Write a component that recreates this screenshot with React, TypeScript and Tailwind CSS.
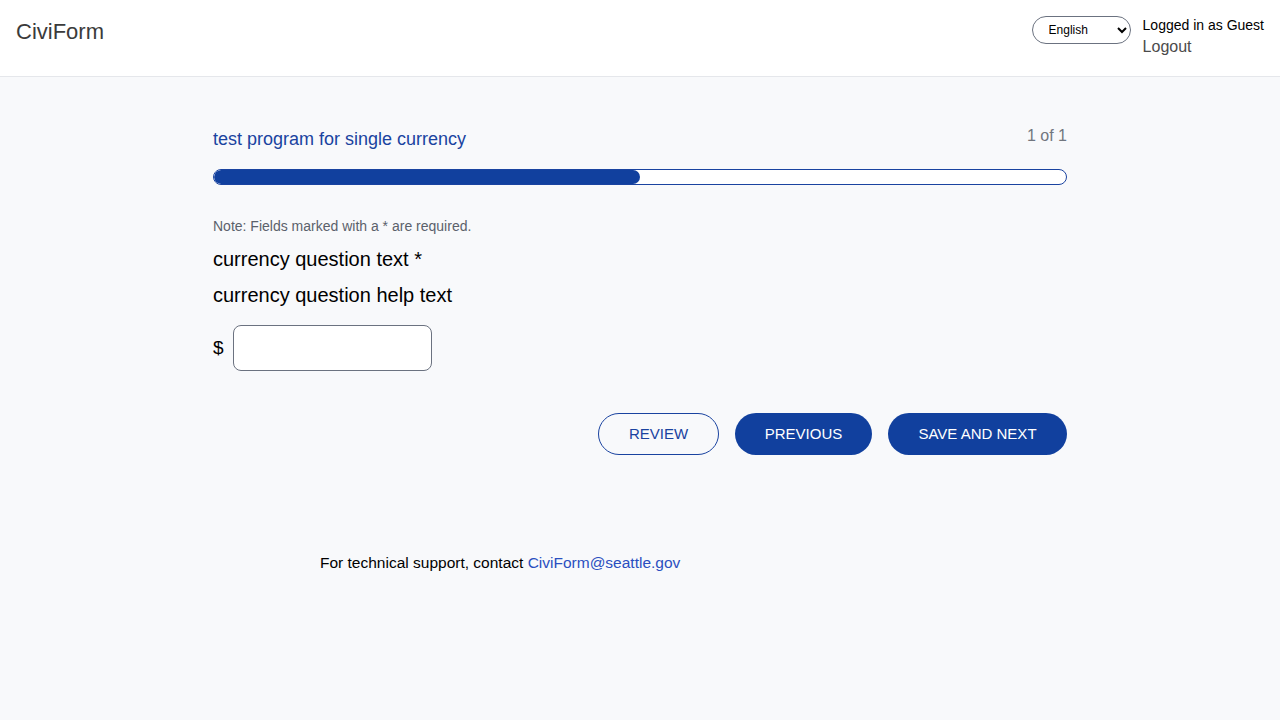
export default function App() {
  return (
    <div className="min-h-screen bg-[#f8f9fb] font-['Liberation_Sans',Arial,sans-serif]">
      {/* HEADER */}
      <header className="flex h-[77px] items-start justify-between border-b border-[#e5e7eb] bg-white px-4 pt-[16px]">
        <div className="text-[22px] leading-[32px] text-[#3b3b3b]">CiviForm</div>
        <div className="flex items-start gap-3">
          <select
            defaultValue="en"
            className="h-[28px] w-[99px] rounded-full border border-[#6b7280] bg-white pl-3 pr-1 text-[12px] text-black"
          >
            <option value="en">English</option>
          </select>
          <div className="flex flex-col">
            <span className="text-[14px] leading-[18px] text-black">Logged in as Guest</span>
            <a href="#" className="text-[16px] leading-[26px] text-[#4b4b4b]">
              Logout
            </a>
          </div>
        </div>
      </header>

      {/* MAIN */}
      <main className="mx-auto w-[854px] pt-[48px]">
        <div className="flex items-start justify-between">
          <h1 className="text-[18px] leading-[28px] text-[#1a43a0]">test program for single currency</h1>
          <span className="mt-[-3px] text-[16px] leading-[28px] text-[#71767e]">1 of 1</span>
        </div>

        <div className="mt-[16px] h-[16px] w-full overflow-hidden rounded-full border border-[#1a43a0] bg-white">
          <div className="h-full rounded-full bg-[#11409e]" style={{ width: "50%" }} />
        </div>

        <p className="mt-[32px] text-[14px] leading-[18px] text-[#5b616b]">
          Note: Fields marked with a * are required.
        </p>
        <div className="mt-[10px] text-[20px] leading-[28px] text-black">currency question text *</div>
        <div className="mt-[8px] text-[20px] leading-[28px] text-black">currency question help text</div>

        <div className="mt-[16px] flex items-center gap-[9px]">
          <span className="text-[19px] text-black">$</span>
          <input
            type="text"
            className="h-[46px] w-[199px] rounded-lg border border-[#6b7280] bg-white px-3"
          />
        </div>

        <div className="mt-[42px] flex justify-end gap-4">
          <button className="h-[42px] w-[121px] rounded-full border border-[#1a43a0] text-[15px] text-[#1a43a0]">
            REVIEW
          </button>
          <button className="h-[42px] w-[137px] rounded-full bg-[#11409e] text-[15px] text-white">
            PREVIOUS
          </button>
          <button className="h-[42px] w-[179px] rounded-full bg-[#11409e] text-[15px] text-white">
            SAVE AND NEXT
          </button>
        </div>
      </main>

      {/* FOOTER */}
      <footer className="mx-auto mt-[96px] w-[640px] text-[15.5px] leading-[24px] text-black">
        For technical support, contact{" "}
        <a href="#" className="text-[#2a4fc0]">
          CiviForm@seattle.gov
        </a>
      </footer>
    </div>
  );
}
